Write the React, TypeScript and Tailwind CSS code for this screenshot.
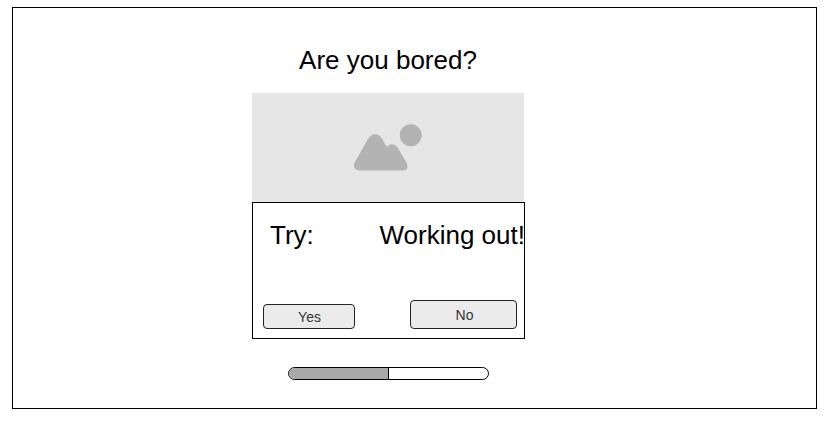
export default function App() {
  return (
    <div className="h-[425px] w-[827px] bg-white pl-3 pt-[7px] font-['Liberation_Sans',Arial,sans-serif] text-black">
      <main className="h-[402px] w-[805px] border border-black pl-[239px] pt-[36px]">
        <div className="flex w-[273px] flex-col">
          <h1 className="h-[49px] w-[272px] text-center text-[26px] leading-[32px]">Are you bored?</h1>
          <div className="h-[109px] w-[272px] bg-[#e6e6e6]">
            <svg className="h-[109px] w-[272px]" viewBox="0 0 272 109" fill="#b3b3b3">
              <circle cx="158.7" cy="42.3" r="11" />
              <path d="M107.500 77.500C103 77.500 100.500 73.500 102.700 69.500L116 46C119 39.700 126.500 39.700 130 45.500L134.700 54C138 50 143 50.500 146 55L154.300 69.500C157 74 155 77.500 151 77.500Z" />
            </svg>
          </div>
          <section className="flex h-[137px] flex-col border border-black">
            <div className="flex justify-between pl-[17px] pt-[16px] text-[26px] leading-[32px]">
              <span>Try:</span>
              <span className="-mr-px whitespace-nowrap">Working out!</span>
            </div>
            <div className="mt-[49px] flex items-end justify-between pl-[10px] pr-[7px] text-[14px] text-[#333]">
              <button className="h-[25px] w-[92px] rounded-[4px] border border-[#222] bg-[#ebebeb] pl-px pt-[2px]">Yes</button>
              <button className="h-[29px] w-[107px] rounded-[4px] border border-[#222] bg-[#ebebeb] pl-[2px] pt-[2px]">No</button>
            </div>
          </section>
          <div className="ml-[36px] mt-[28px] h-[13px] w-[201px] overflow-hidden rounded-full border border-black">
            <div className="h-full w-[100px] border-r border-black bg-[#a9a9a9]" />
          </div>
        </div>
      </main>
    </div>
  );
}
